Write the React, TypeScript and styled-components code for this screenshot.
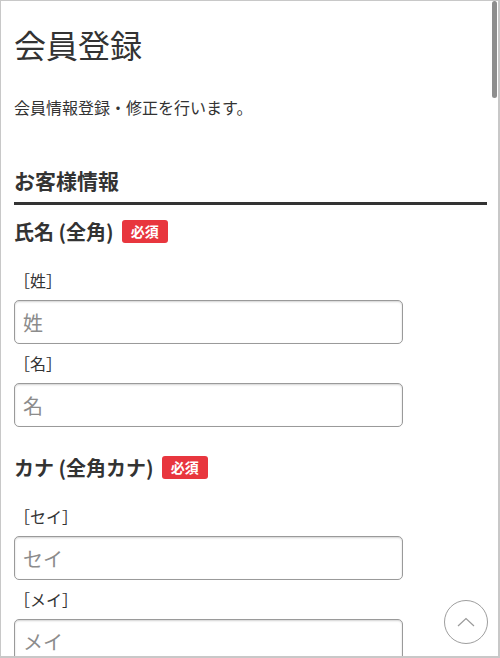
import styled, { createGlobalStyle } from 'styled-components';

const GlobalStyle = createGlobalStyle`
	html, body {
		margin: 0;
		padding: 0;
		background: #fff;
	}
	body {
		font-family: "Noto Sans CJK JP", "Noto Sans", sans-serif;
		color: #333;
	}
	* {
		box-sizing: border-box;
	}
`;

interface FieldDef {
	label: string;
	inputs: { label: string; placeholder: string }[];
}

const fields: FieldDef[] = [
	{
		label: '氏名 (全角)',
		inputs: [
			{ label: '［姓］', placeholder: '姓' },
			{ label: '［名］', placeholder: '名' },
		],
	},
	{
		label: 'カナ (全角カナ)',
		inputs: [
			{ label: '［セイ］', placeholder: 'セイ' },
			{ label: '［メイ］', placeholder: 'メイ' },
		],
	},
];

export default function App() {
	return (
		<>
			<GlobalStyle />
			<Frame>
				<Page>
					<PageTitle>会員登録</PageTitle>
					<Lead>会員情報登録・修正を行います。</Lead>
					<Section>
						<SectionTitle>お客様情報</SectionTitle>
						{fields.map(field => (
							<Field key={field.label}>
								<FieldHeading>
									<FieldName>{field.label}</FieldName>
									<RequiredBadge>必須</RequiredBadge>
								</FieldHeading>
								<FieldBody>
									{field.inputs.map(input => (
										<InputGroup key={input.label}>
											<InputLabel>{input.label}</InputLabel>
											<TextInput type="text" placeholder={input.placeholder} />
										</InputGroup>
									))}
								</FieldBody>
							</Field>
						))}
					</Section>
				</Page>
				<ScrollThumb />
				<PageTopButton aria-label="ページトップへ">
					<svg width="18" height="10" viewBox="0 0 18 10" fill="none">
						<polyline points="1,9 9,1.5 17,9" stroke="#9a9a9a" strokeWidth="1.2" />
					</svg>
				</PageTopButton>
			</Frame>
		</>
	);
}

const Frame = styled.div`
	position: relative;
	width: 500px;
	height: 658px;
	overflow: hidden;
	border: 1px solid #c8c8c8;
	border-right-width: 2px;
	border-bottom-width: 2px;
	background: #fff;
`;

const Page = styled.main`
	padding: 19px 11px 0 13px;
`;

const PageTitle = styled.h1`
	margin: 0;
	font-size: 32px;
	font-weight: 400;
	line-height: 48px;
	color: #333;
`;

const Lead = styled.p`
	margin: 27px 0 0;
	font-size: 16px;
	line-height: 24px;
`;

const Section = styled.section`
	margin-top: 46px;
`;

const SectionTitle = styled.h2`
	margin: 0;
	padding-bottom: 7px;
	font-size: 21px;
	font-weight: 700;
	line-height: 30px;
	border-bottom: 3px solid #333;
`;

const Field = styled.div`
	margin-top: 25px;

	&:first-of-type {
		margin-top: 11px;
	}
`;

const FieldHeading = styled.div`
	display: flex;
	align-items: center;
	height: 30px;
`;

const FieldName = styled.span`
	font-size: 20px;
	font-weight: 700;
`;

const RequiredBadge = styled.span`
	display: inline-flex;
	align-items: center;
	justify-content: center;
	margin-left: 8px;
	width: 46px;
	height: 23px;
	border-radius: 3px;
	background: #e8363e;
	color: #fff;
	font-size: 14px;
	font-weight: 700;
`;

const FieldBody = styled.div`
	padding-top: 22px;
	display: flex;
	flex-direction: column;
	gap: 7px;
`;

const InputGroup = styled.div`
	display: flex;
	flex-direction: column;
	gap: 8px;
`;

const InputLabel = styled.label`
	font-size: 16px;
	line-height: 24px;
`;

const TextInput = styled.input`
	width: 389px;
	height: 44px;
	padding: 0 8px;
	border: 1px solid #9a9a9a;
	border-radius: 5px;
	box-shadow: inset 0 1px 2px rgba(0, 0, 0, 0.18);
	font-family: inherit;
	font-size: 20px;
	color: #333;
	background: #fff;
	outline: none;

	&::placeholder {
		color: #8c8c8c;
	}
`;

const ScrollThumb = styled.div`
	position: absolute;
	top: 0;
	right: 1px;
	width: 5px;
	height: 97px;
	border-radius: 3px;
	background: #8e8e8e;
`;

const PageTopButton = styled.button`
	position: absolute;
	left: 443px;
	top: 599px;
	width: 44px;
	height: 44px;
	padding: 0;
	display: flex;
	align-items: center;
	justify-content: center;
	border: 1px solid #9e9e9e;
	border-radius: 50%;
	background: #fff;
`;
